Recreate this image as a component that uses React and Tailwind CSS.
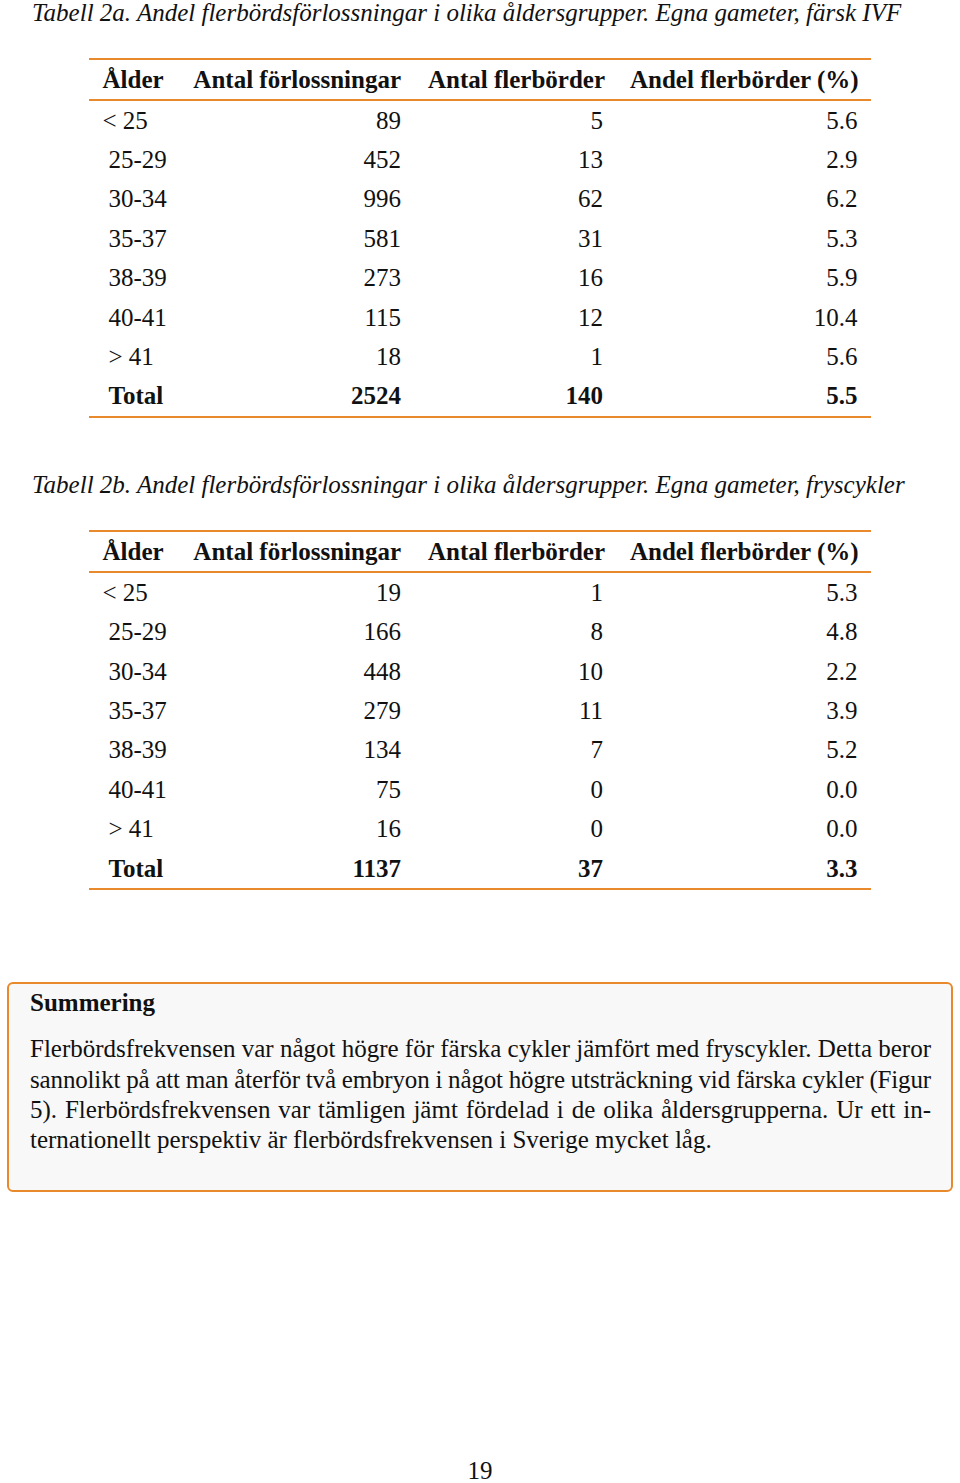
import React from "react";

const tableA = [
  ["< 25", "89", "5", "5.6"],
  ["25-29", "452", "13", "2.9"],
  ["30-34", "996", "62", "6.2"],
  ["35-37", "581", "31", "5.3"],
  ["38-39", "273", "16", "5.9"],
  ["40-41", "115", "12", "10.4"],
  ["> 41", "18", "1", "5.6"],
  ["Total", "2524", "140", "5.5"],
];

const tableB = [
  ["< 25", "19", "1", "5.3"],
  ["25-29", "166", "8", "4.8"],
  ["30-34", "448", "10", "2.2"],
  ["35-37", "279", "11", "3.9"],
  ["38-39", "134", "7", "5.2"],
  ["40-41", "75", "0", "0.0"],
  ["> 41", "16", "0", "0.0"],
  ["Total", "1137", "37", "3.3"],
];

function Caption({ children, className = "" }) {
  return (
    <div className={"shrink-0 pl-[32px] italic text-[25px] leading-[28px] whitespace-nowrap " + className}>
      {children}
    </div>
  );
}

function DataTable({ rows, className = "" }) {
  const cols = "grid grid-cols-[87.5px_238px_202px_254.5px]";
  return (
    <div className={"shrink-0 ml-[89px] w-[782px] " + className}>
      <div className="h-[2px] bg-[#e8892c]" />
      <div className={cols + " h-[39px] items-center font-bold"}>
        <div className="px-[13.5px] whitespace-nowrap">Ålder</div>
        <div className="px-[13.5px] text-right whitespace-nowrap">Antal förlossningar</div>
        <div className="px-[13.5px] text-right whitespace-nowrap">Antal flerbörder</div>
        <div className="px-[13.5px] text-right whitespace-nowrap">Andel flerbörder (%)</div>
      </div>
      <div className="h-[2px] bg-[#e8892c]" />
      {rows.map((r, i) => {
        const isTotal = r[0] === "Total";
        return (
          <div
            key={i}
            className={cols + " h-[39.4px] items-center " + (isTotal ? "font-bold" : "")}
          >
            <div className={"px-[13.5px] whitespace-nowrap " + (i === 0 ? "" : "pl-[19.5px]")}>
              {r[0]}
            </div>
            <div className="px-[13.5px] text-right">{r[1]}</div>
            <div className="px-[13.5px] text-right">{r[2]}</div>
            <div className="px-[13.5px] text-right">{r[3]}</div>
          </div>
        );
      })}
      <div className="h-[2px] bg-[#e8892c]" />
    </div>
  );
}

export default function App() {
  return (
    <div
      className="w-[960px] min-h-[1483px] bg-white text-[#111] text-[25px] leading-[28px] flex flex-col"
      style={{ fontFamily: '"Liberation Serif", "Times New Roman", serif' }}
    >
      <Caption className="-mt-[1px]">
        Tabell 2a. Andel flerbördsförlossningar i olika åldersgrupper. Egna gameter, färsk IVF
      </Caption>
      <DataTable rows={tableA} className="mt-[31px]" />

      <Caption className="mt-[53px]">
        Tabell 2b. Andel flerbördsförlossningar i olika åldersgrupper. Egna gameter, fryscykler
      </Caption>
      <DataTable rows={tableB} className="mt-[31px]" />

      <div className="shrink-0 mx-[7px] mt-[92px] h-[210px] rounded-[6px] border-2 border-[#e8892c] bg-[#f8f8f8] pl-[21px] pr-[20px] pt-[5px]">
        <div className="font-bold">Summering</div>
        <div className="mt-[17px] leading-[30.3px]">
          <div className="text-justify [text-align-last:justify] whitespace-nowrap [word-spacing:-2px]">
            Flerbördsfrekvensen var något högre för färska cykler jämfört med fryscykler. Detta beror
          </div>
          <div className="text-justify [text-align-last:justify] whitespace-nowrap [word-spacing:-2px] tracking-[-0.15px]">
            sannolikt på att man återför två embryon i något högre utsträckning vid färska cykler (Figur
          </div>
          <div className="text-justify [text-align-last:justify] whitespace-nowrap [word-spacing:-2px]">
            5). Flerbördsfrekvensen var tämligen jämt fördelad i de olika åldersgrupperna. Ur ett in-
          </div>
          <div className="whitespace-nowrap">
            ternationellt perspektiv är flerbördsfrekvensen i Sverige mycket låg.
          </div>
        </div>
      </div>

      <div className="shrink-0 mt-[267px] leading-[24px] text-center">19</div>
    </div>
  );
}
